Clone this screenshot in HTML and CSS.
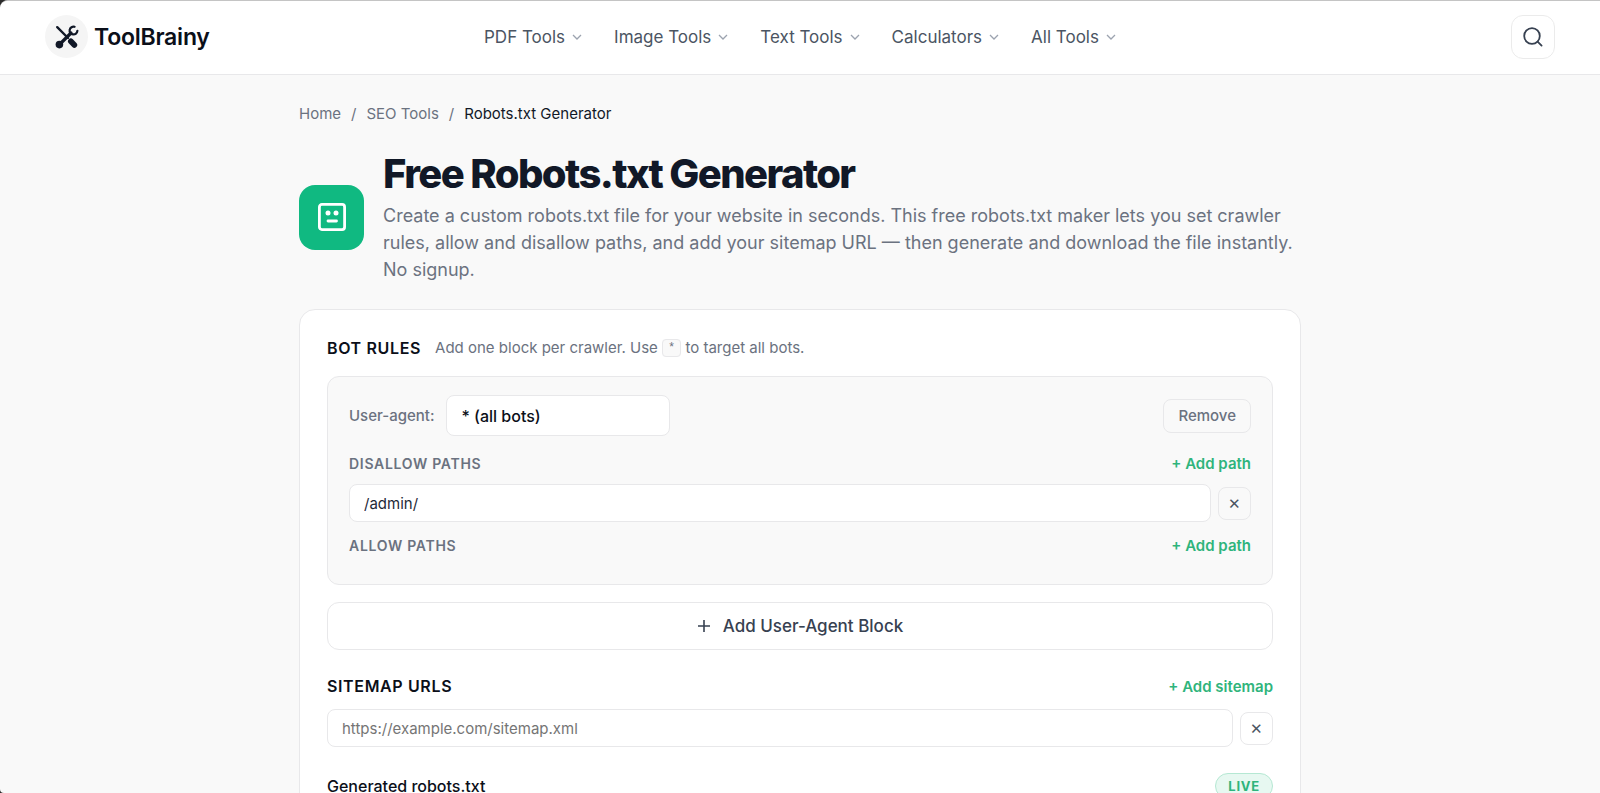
FILE: index.html
```html
<!DOCTYPE html>
<html lang="en">
<head>
  <meta charset="UTF-8" />
  <meta name="viewport" content="width=device-width, initial-scale=1.0" />
  <title>Free Robots.txt Generator - ToolBrainy</title>
  <link rel="stylesheet" href="styles.css">
</head>
<body>
  <div class="window">
    <header class="site-header">
      <a class="brand" href="#">
        <span class="brand-mark">
          <svg width="24" height="24" viewBox="0 0 24 24" fill="none" stroke="#111827" stroke-linecap="round">
            <path d="M2.2 2.2 L13 13" stroke-width="2.4" />
            <path d="M15.8 16.2 L19.4 20" stroke-width="5.6" />
            <path d="M4.5 19.5 L16 8" stroke-width="3.2" />
            <circle cx="4.4" cy="19.6" r="3.8" fill="#111827" stroke="none" />
            <path d="M19.6 1.8 A3.9 3.9 0 1 0 22.4 5.8" stroke-width="2.2" />
          </svg>
        </span>
        <span class="brand-name">ToolBrainy</span>
      </a>

      <nav class="main-nav">
        <a href="#">PDF Tools <svg class="chevron" viewBox="0 0 10 10"><path d="M1 3 L5 7 L9 3" /></svg></a>
        <a href="#">Image Tools <svg class="chevron" viewBox="0 0 10 10"><path d="M1 3 L5 7 L9 3" /></svg></a>
        <a href="#">Text Tools <svg class="chevron" viewBox="0 0 10 10"><path d="M1 3 L5 7 L9 3" /></svg></a>
        <a href="#">Calculators <svg class="chevron" viewBox="0 0 10 10"><path d="M1 3 L5 7 L9 3" /></svg></a>
        <a href="#">All Tools <svg class="chevron" viewBox="0 0 10 10"><path d="M1 3 L5 7 L9 3" /></svg></a>
      </nav>

      <button class="search-btn" type="button" aria-label="Search">
        <svg width="22" height="22" viewBox="0 0 22 22" fill="none" stroke="#374151" stroke-width="1.8" stroke-linecap="round">
          <circle cx="10" cy="10" r="7.8" />
          <path d="M15.6 15.6 L19.6 19.6" />
        </svg>
      </button>
    </header>

    <main class="container">
      <nav class="breadcrumb">
        <a href="#">Home</a>
        <span>/</span>
        <a href="#">SEO Tools</a>
        <span>/</span>
        <span class="current">Robots.txt Generator</span>
      </nav>

      <section class="hero">
        <div class="hero-icon">
          <svg width="28" height="28" viewBox="0 0 28 28" fill="none" stroke="#fff" stroke-width="2.8" stroke-linecap="round">
            <rect x="1.4" y="1.4" width="25.2" height="25.2" rx="2.5" />
            <path d="M10 18 H18.5" />
            <circle cx="10" cy="10" r="2.5" fill="#fff" stroke="none" />
            <circle cx="18" cy="10" r="2.5" fill="#fff" stroke="none" />
          </svg>
        </div>
        <div>
          <h1>Free Robots.txt Generator</h1>
          <p>Create a custom robots.txt file for your website in seconds. This free robots.txt maker lets you set crawler rules, allow and disallow paths, and add your sitemap URL — then generate and download the file instantly. No signup.</p>
        </div>
      </section>

      <section class="card">
        <div class="section-head">
          <h2>Bot Rules</h2>
          <p class="hint">Add one block per crawler. Use <code>*</code> to target all bots.</p>
        </div>

        <div class="bot-block">
          <div class="agent-row">
            <label for="agent">User-agent:</label>
            <input type="text" id="agent" class="agent-input" value="* (all bots)" />
            <button type="button" class="remove-btn">Remove</button>
          </div>

          <div class="path-head">
            <label for="disallow">Disallow paths</label>
            <button type="button" class="add-link">+ Add path</button>
          </div>
          <div class="field-row">
            <input type="text" id="disallow" class="field" value="/admin/" />
            <button type="button" class="x-btn" aria-label="Remove path">✕</button>
          </div>

          <div class="path-head">
            <h3>Allow paths</h3>
            <button type="button" class="add-link">+ Add path</button>
          </div>
        </div>

        <button type="button" class="add-block">
          <svg width="14" height="14" viewBox="0 0 14 14" stroke="#374151" stroke-width="1.6"><path d="M7 1 V13 M1 7 H13" /></svg>
          Add User-Agent Block
        </button>

        <div class="section-head split">
          <h2><label for="sitemap">Sitemap URLs</label></h2>
          <button type="button" class="add-link">+ Add sitemap</button>
        </div>
        <div class="field-row">
          <input type="text" id="sitemap" class="field" placeholder="https://example.com/sitemap.xml" />
          <button type="button" class="x-btn" aria-label="Remove sitemap">✕</button>
        </div>

        <div class="output-head">
          <span class="output-title">Generated robots.txt</span>
          <span class="live">LIVE</span>
        </div>
      </section>
    </main>
  </div>
</body>
</html>
```
FILE: styles.css
```css
* {
  box-sizing: border-box;
}

body {
  margin: 0;
  background: #2b2b2b;
  font-family: Inter, "Liberation Sans", sans-serif;
  color: #111827;
  height: 100vh;
  overflow: hidden;
}

h1, h2, h3, p {
  margin: 0;
}

a {
  color: inherit;
  text-decoration: none;
}

button, input {
  font-family: inherit;
}

button {
  cursor: pointer;
}

.window {
  height: 100vh;
  overflow: hidden;
  background: #f9f9f9;
  border-top: 1px solid #c4c4c4;
  border-radius: 8px 0 0 4px;
}

/* Header */
.site-header {
  display: grid;
  grid-template-columns: 1fr auto 1fr;
  align-items: center;
  height: 74px;
  padding: 0 45px 2px;
  background: #fff;
  border-bottom: 1px solid #e8e8ea;
}

.brand {
  display: flex;
  align-items: center;
  gap: 6px;
}

.brand-mark {
  display: flex;
  align-items: center;
  justify-content: center;
  width: 43px;
  height: 43px;
  border-radius: 50%;
  background: #f5f5f5;
}

.brand-name {
  font-size: 23px;
  font-weight: 600;
  letter-spacing: -0.01em;
  color: #0b0f19;
}

.main-nav {
  display: flex;
  gap: 32px;
  font-size: 17px;
  color: #4b5563;
}

.main-nav a {
  display: flex;
  align-items: center;
  gap: 7px;
}

.chevron {
  width: 10px;
  height: 10px;
  fill: none;
  stroke: #9ca3af;
  stroke-width: 1.3;
}

.search-btn {
  display: flex;
  align-items: center;
  justify-content: center;
  justify-self: end;
  width: 44px;
  height: 44px;
  padding: 0;
  background: #fff;
  border: 1px solid #ebebeb;
  border-radius: 12px;
}

.container {
  max-width: 1002px;
  margin: 0 auto;
}

.breadcrumb {
  display: flex;
  gap: 10px;
  padding-top: 28px;
  font-size: 15px;
  line-height: 22px;
  color: #6b7280;
}

.breadcrumb .current {
  color: #111827;
}

/* Title area */
.hero {
  display: flex;
  align-items: center;
  gap: 19px;
  padding: 26px 0;
}

.hero-icon {
  display: flex;
  align-items: center;
  justify-content: center;
  flex: none;
  width: 65px;
  height: 65px;
  border-radius: 16px;
  background: #10b981;
}

.hero h1 {
  font-size: 40px;
  font-weight: 800;
  line-height: 46px;
  letter-spacing: -0.04em;
  margin-bottom: 5px;
}

.hero p {
  font-size: 18px;
  line-height: 27px;
  color: #6b7280;
}

/* Tool card */
.card {
  padding: 27px;
  background: #fff;
  border: 1px solid #e8e8ea;
  border-radius: 16px;
}

.section-head {
  display: flex;
  align-items: center;
  gap: 14px;
  height: 22px;
  margin-bottom: 17px;
}

.section-head h2 {
  font-size: 16px;
  font-weight: 600;
  letter-spacing: 0.04em;
  text-transform: uppercase;
  color: #0b0f19;
}

.split {
  justify-content: space-between;
  margin-bottom: 12px;
}

.hint {
  font-size: 15px;
  line-height: 22px;
  color: #6b7280;
}

.hint code {
  padding: 1px 5px;
  font-family: "Liberation Mono", monospace;
  font-size: 12px;
  vertical-align: middle;
  background: #f9f9f9;
  border: 1px solid #e8e8ea;
  border-radius: 4px;
}

.bot-block {
  padding: 18px 21px;
  background: #f9f9f9;
  border: 1px solid #e8e8ea;
  border-radius: 12px;
}

.agent-row {
  display: flex;
  align-items: center;
  gap: 12px;
  margin-bottom: 15px;
}

.agent-row label {
  font-size: 15px;
  font-weight: 500;
  color: #6b7280;
}

.agent-input {
  width: 224px;
  height: 41px;
  padding: 0 14px;
  font-size: 16px;
  font-weight: 500;
  color: #0b0f19;
  background: #fff;
  border: 1px solid #e8e8ea;
  border-radius: 8px;
}

.remove-btn {
  height: 34px;
  margin-left: auto;
  padding: 0 14px;
  font-size: 15px;
  font-weight: 500;
  color: #6b7280;
  background: transparent;
  border: 1px solid #e8e8ea;
  border-radius: 8px;
}

.path-head {
  display: flex;
  align-items: center;
  justify-content: space-between;
  height: 24px;
  margin-bottom: 9px;
}

.path-head label,
.path-head h3 {
  font-size: 14px;
  font-weight: 600;
  letter-spacing: 0.05em;
  text-transform: uppercase;
  color: #6b7280;
}

.add-link {
  padding: 0;
  font-size: 15px;
  font-weight: 600;
  color: #2fb47c;
  background: none;
  border: none;
}

.field-row {
  display: flex;
  align-items: center;
  gap: 7px;
}

.field {
  flex: 1;
  min-width: 0;
  height: 38px;
  padding: 0 14px;
  font-size: 15px;
  color: #1f2937;
  background: #fff;
  border: 1px solid #e8e8ea;
  border-radius: 8px;
}

.field::placeholder {
  color: #757575;
}

.x-btn {
  width: 33px;
  height: 33px;
  padding: 0;
  font-size: 15px;
  color: #4b5563;
  background: transparent;
  border: 1px solid #e8e8ea;
  border-radius: 8px;
}

.bot-block .field-row {
  margin-bottom: 11px;
}

.add-block {
  display: flex;
  align-items: center;
  justify-content: center;
  gap: 12px;
  width: 100%;
  height: 48px;
  margin: 17px 0 25px;
  font-size: 17px;
  font-weight: 500;
  color: #374151;
  background: #fff;
  border: 1px solid #e8e8ea;
  border-radius: 12px;
}

.output-head {
  display: flex;
  align-items: center;
  justify-content: space-between;
  margin-top: 26px;
}

.output-title {
  font-size: 16px;
  font-weight: 500;
  line-height: 24px;
  color: #0b0f19;
}

.live {
  padding: 0 12px;
  font-size: 13px;
  font-weight: 700;
  line-height: 24px;
  letter-spacing: 0.06em;
  color: #2fb47c;
  background: #e7f8f1;
  border: 1px solid #b5e8d3;
  border-radius: 14px;
}
```
